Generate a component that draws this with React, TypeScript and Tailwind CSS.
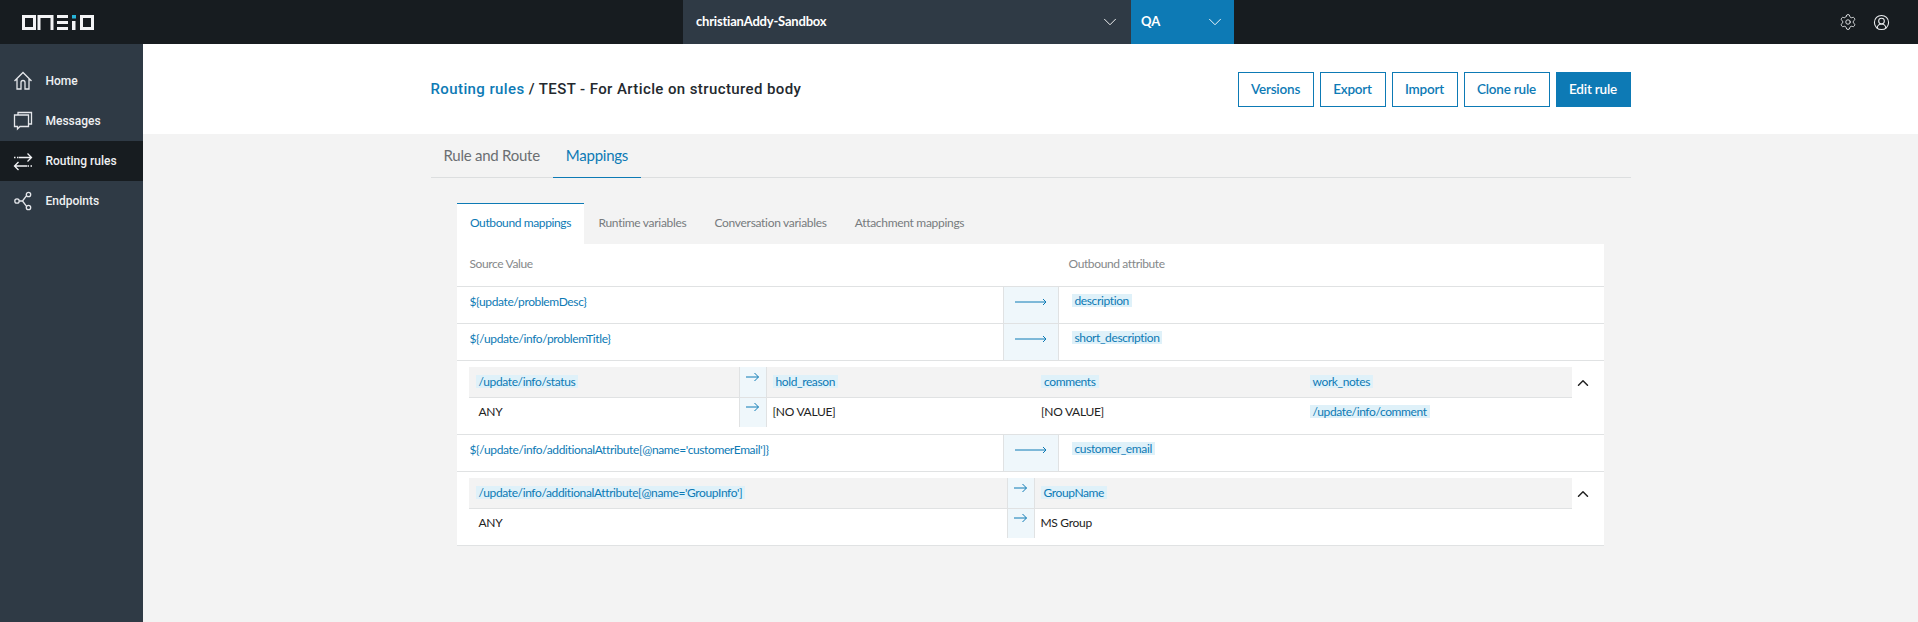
import { ChevronDown, ChevronUp, Settings, CircleUserRound } from "lucide-react";

const NAV = [
  { label: "Home", icon: <HomeIcon /> },
  { label: "Messages", icon: <MessagesIcon /> },
  { label: "Routing rules", icon: <RoutingIcon />, active: true },
  { label: "Endpoints", icon: <EndpointsIcon /> },
];

function HomeIcon() {
  return (
    <svg width="20" height="20" viewBox="0 0 20 20" fill="none" stroke="#e5e7eb" strokeWidth="1.3">
      <path d="M1.500 10 10 1.500 18.500 10M4 8v10h4v-6.500a2 2 0 0 1 4 0V18h4V8" />
    </svg>
  );
}

function MessagesIcon() {
  return (
    <svg width="20" height="20" viewBox="0 0 20 20" fill="none" stroke="#e5e7eb" strokeWidth="1.3">
      <path d="M5 4V1.500h13.500V13H16M1.500 4H15.500V15.500H7L4.500 18V15.500H1.500Z" />
    </svg>
  );
}

function RoutingIcon() {
  return (
    <svg width="20" height="20" viewBox="0 0 20 20" fill="none" stroke="#f3f4f6" strokeWidth="1.3">
      <path d="M1 6.500h5" strokeDasharray="1.500 1.500" />
      <path d="M6 6.500h12.500M14.500 2.500l4 4-4 4" />
      <path d="M19 15h-5" strokeDasharray="1.500 1.500" />
      <path d="M14 15H1.500M5.500 11l-4 4 4 4" />
    </svg>
  );
}

function EndpointsIcon() {
  return (
    <svg width="20" height="20" viewBox="0 0 20 20" fill="none" stroke="#e5e7eb" strokeWidth="1.3">
      <circle cx="4" cy="10" r="2.200" />
      <circle cx="15.500" cy="3.500" r="2.200" />
      <circle cx="15.500" cy="16.500" r="2.200" />
      <path d="M6.200 10H9.500L13.600 4.700M9.500 10l4.100 5.300" />
    </svg>
  );
}

function Logo() {
  return (
    <svg width="73" height="15" viewBox="0 0 73 15" fill="#f3f4f6">
      <path fillRule="evenodd" d="M1 0h14v15H1ZM4 3v9h8V3Z" />
      <path d="M16.500 0h16v15h-3V3H19.500v12h-3Z" />
      <path d="M36 0h11v3H36ZM36 6h11v3H36ZM36 12h11v3H36Z" />
      <path d="M51 0h4v3.500h-4Z" fill="#27b4d8" />
      <path d="M51 6h3.500v9H51Z" />
      <path fillRule="evenodd" d="M59 0h14v15H59ZM62 3v9h8V3Z" />
    </svg>
  );
}

function LongArrow() {
  return (
    <svg width="32" height="8" viewBox="0 0 32 8" fill="none" stroke="#0d7ab5" strokeWidth="1">
      <path d="M0 4h31M28 1l3 3-3 3" />
    </svg>
  );
}

function ShortArrow() {
  return (
    <svg width="13" height="10" viewBox="0 0 13 10" fill="none" stroke="#0d7ab5" strokeWidth="1">
      <path d="M0 5h12.500M8.500 1l4 4-4 4" />
    </svg>
  );
}

function Tag({ children }: { children: string }) {
  return <span className="block w-fit bg-[#dff1f9] px-[3px] text-[12px] leading-[13px] tracking-[-0.38px] text-[#0d7ab5]">{children}</span>;
}

function SimpleRow({ source, target }: { source: string; target: string }) {
  return (
    <div className="flex h-[37px] border-b border-[#e0e2e3] bg-white">
      <div className="w-[545.500px] pl-[12.500px] pt-[6px] text-[12px] leading-[18px] tracking-[-0.38px] text-[#0d7ab5]">{source}</div>
      <div className="flex w-[56px] justify-center border-x border-[#e0e2e3] bg-[#eff7fb] pt-[11px]">
        <div className="h-[8px]"><LongArrow /></div>
      </div>
      <div className="pl-[13px] pt-[7px]"><Tag>{target}</Tag></div>
    </div>
  );
}

function ArrowCell({ className }: { className: string }) {
  return (
    <div className={`flex w-[28px] justify-center border-x border-[#e0e2e3] bg-[#eff7fb] ${className}`}>
      <div className="h-[10px]"><ShortArrow /></div>
    </div>
  );
}

function NestedRow({ source, sourceWidth, columns }: { source: string; sourceWidth: string; columns: { name: string; value: string; isTag?: boolean }[] }) {
  return (
    <div className="flex h-[74px] border-b border-[#e0e2e3] bg-white pl-[11.500px] pt-[6px]">
      <div className="w-[1103.500px]">
        <div className="flex h-[31px] border-b border-[#e0e2e3] bg-[#f3f3f3]">
          <div className={`${sourceWidth} pl-[7px] pt-[8px]`}><Tag>{source}</Tag></div>
          <ArrowCell className="pt-[5px]" />
          <div className="flex flex-1">
            {columns.map((col) => (
              <div key={col.name} className="flex-1 pl-[6px] pt-[8px]"><Tag>{col.name}</Tag></div>
            ))}
          </div>
        </div>
        <div className="flex h-[29px]">
          <div className={`${sourceWidth} pl-[10px] pt-[5px] text-[12px] leading-[18px] tracking-[-0.3px] text-[#222]`}>ANY</div>
          <ArrowCell className="pt-[4px]" />
          <div className="flex flex-1">
            {columns.map((col) => (
              <div key={col.name} className="flex-1 pl-[6px] pt-[5px] text-[12px] leading-[18px] tracking-[-0.3px] text-[#222]">
                {col.isTag ? <div className="pt-[2px]"><Tag>{col.value}</Tag></div> : col.value}
              </div>
            ))}
          </div>
        </div>
      </div>
      <div className="flex w-[21px] justify-center pt-[7px]">
        <div className="h-[18px]"><ChevronUp size={18} strokeWidth={2} color="#222" /></div>
      </div>
    </div>
  );
}

export default function App() {
  return (
    <div className="flex h-[622px] w-[1918px] flex-col overflow-hidden bg-[#f3f3f3] font-['Lato',sans-serif]">
      <header className="flex h-[44px] shrink-0 bg-[#171c20] text-white">
        <div className="flex w-[683px] items-center pl-[21px]"><Logo /></div>
        <div className="flex w-[448px] items-center justify-between bg-[#2f3a45] pl-[13px] pr-[10px] text-[13px] font-bold tracking-[-0.2px]">
          <span>christianAddy-Sandbox</span>
          <ChevronDown size={22} strokeWidth={1} />
        </div>
        <div className="flex w-[103px] items-center justify-between bg-[#0d7ab5] pl-[10px] pr-[8px] text-[13px] font-bold">
          <span>QA</span>
          <ChevronDown size={22} strokeWidth={1} />
        </div>
        <div className="flex flex-1 items-center justify-end gap-[15.500px] pr-[28.500px] text-[#eceef0]">
          <Settings size={18} strokeWidth={1.2} />
          <CircleUserRound size={17} strokeWidth={1.5} />
        </div>
      </header>
      <div className="flex flex-1">
        <aside className="w-[143px] shrink-0 bg-[#2f3a45] pt-[17px]">
          {NAV.map((item) => (
            <div key={item.label} className={`flex h-[40px] items-center pl-[12.500px] ${item.active ? "bg-[#171c20]" : ""}`}>
              <span className="w-[33px]">{item.icon}</span>
              <span className="font-['Roboto',sans-serif] text-[12px] font-medium text-[#eef0f2]">{item.label}</span>
            </div>
          ))}
        </aside>
        <main className="flex-1">
          <div className="h-[90px] bg-white pt-[28px]">
            <div className="mx-auto flex w-[1200px] items-center justify-between">
              <h1 className="font-['Roboto',sans-serif] text-[15px] font-medium tracking-[0.4px] text-[#24292e]">
                <span className="text-[#0d7ab5]">Routing rules</span> / TEST - For Article on structured body
              </h1>
              <div className="flex gap-[6px] text-[13.500px] font-semibold tracking-[-0.2px]">
                {[
                  ["Versions", "w-[76px]"],
                  ["Export", "w-[66px]"],
                  ["Import", "w-[66px]"],
                  ["Clone rule", "w-[86px]"],
                ].map(([label, width]) => (
                  <button key={label} className={`h-[35px] ${width} border border-[#0d7ab5] bg-white text-[#0d7ab5]`}>{label}</button>
                ))}
                <button className="h-[35px] w-[75px] bg-[#0d7ab5] text-white">Edit rule</button>
              </div>
            </div>
          </div>
          <div className="mx-auto w-[1200px]">
            <div className="flex h-[44px] border-b border-[#dcdedf] pb-[1px] pl-[13px] text-[15px] tracking-[-0.25px] text-[#6b6f72]">
              <div className="flex items-center pr-[13px]">Rule and Route</div>
              <div className="-mb-[2px] flex items-center border-b border-[#0d7ab5] px-[13px] pb-[1px] text-[#0d7ab5]">Mappings</div>
            </div>
            <div className="px-[26.500px] pt-[25px]">
              <div className="flex h-[41px] items-center text-[12px] text-[#777b7e]">
                <div className="flex h-full w-[127px] items-center justify-center border-t border-[#0d7ab5] bg-white pb-[2px] tracking-[-0.38px] text-[#0d7ab5]">Outbound mappings</div>
                <div className="flex gap-[28px] pb-[2px] pl-[14.500px] tracking-[-0.3px]">
                  <span>Runtime variables</span>
                  <span>Conversation variables</span>
                  <span>Attachment mappings</span>
                </div>
              </div>
              <div className="flex h-[43px] border-b border-[#e0e2e3] bg-white pt-[11px] text-[12px] leading-[18px] tracking-[-0.38px] text-[#85888a]">
                <div className="w-[611.500px] pl-[12.500px]">Source Value</div>
                <div>Outbound attribute</div>
              </div>
              <SimpleRow source="${update/problemDesc}" target="description" />
              <SimpleRow source="${/update/info/problemTitle}" target="short_description" />
              <NestedRow
                source="/update/info/status"
                sourceWidth="w-[270px]"
                columns={[
                  { name: "hold_reason", value: "[NO VALUE]" },
                  { name: "comments", value: "[NO VALUE]" },
                  { name: "work_notes", value: "/update/info/comment", isTag: true },
                ]}
              />
              <SimpleRow source="${/update/info/additionalAttribute[@name='customerEmail']}" target="customer_email" />
              <NestedRow
                source="/update/info/additionalAttribute[@name='GroupInfo']"
                sourceWidth="w-[538px]"
                columns={[{ name: "GroupName", value: "MS Group" }]}
              />
            </div>
          </div>
        </main>
      </div>
    </div>
  );
}
